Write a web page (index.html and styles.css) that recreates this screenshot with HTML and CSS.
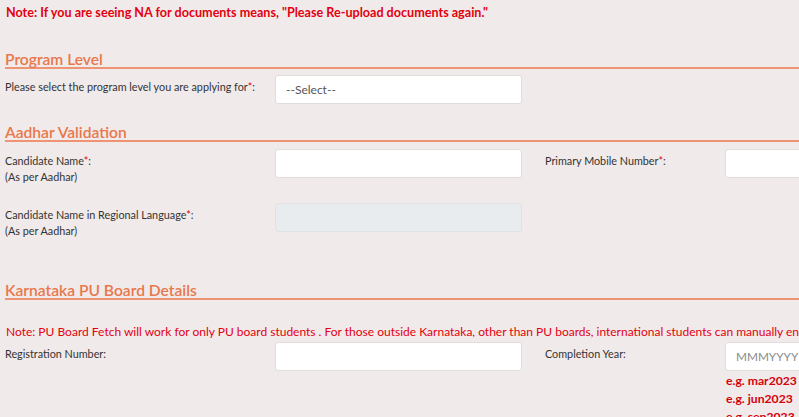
FILE: index.html
```html
<!DOCTYPE html>
<html>
<head>
<meta charset="utf-8">
<link rel="stylesheet" href="styles.css">
</head>
<body>
<div class="page">
  <p class="top-note">Note: If you are seeing NA for documents means, "Please Re-upload documents again."</p>

  <section class="section s-program">
    <h2 class="section-title">Program Level</h2>
    <div class="row r-program">
      <label class="label">Please select the program level you are applying for<span class="req">*</span>:</label>
      <div class="field"><div class="control select">--Select--</div></div>
    </div>
  </section>

  <section class="section s-aadhar">
    <h2 class="section-title">Aadhar Validation</h2>
    <div class="row r-name">
      <label class="label">Candidate Name<span class="req">*</span>:<br>(As per Aadhar)</label>
      <div class="field"><div class="control"></div></div>
      <label class="label label2">Primary Mobile Number<span class="req">*</span>:</label>
      <div class="field"><div class="control"></div></div>
    </div>
    <div class="row r-regional">
      <label class="label">Candidate Name in Regional Language<span class="req">*</span>:<br>(As per Aadhar)</label>
      <div class="field"><div class="control disabled"></div></div>
    </div>
  </section>

  <section class="section s-pu">
    <h2 class="section-title">Karnataka PU Board Details</h2>
    <p class="pu-note">Note: PU Board Fetch will work for only PU board students . For those outside Karnataka, other than PU boards, international students can manually enter their details.</p>
    <div class="row r-reg">
      <label class="label">Registration Number:</label>
      <div class="field"><div class="control"></div></div>
      <label class="label label2">Completion Year:</label>
      <div class="field">
        <div class="control placeholder">MMMYYYY</div>
        <ul class="examples">
          <li>e.g. mar2023</li>
          <li>e.g. jun2023</li>
          <li>e.g. sep2023</li>
        </ul>
      </div>
    </div>
  </section>
</div>
</body>
</html>
```
FILE: styles.css
```css
html, body {
  margin: 0;
  padding: 0;
  overflow: hidden;
  background: #f1eaea;
}
body {
  font-family: "Lato", "Liberation Sans", sans-serif;
  color: #333;
  width: 799px;
  height: 417px;
}
.page {
  width: 1100px;
  padding: 5px 0 0 5px;
  box-sizing: border-box;
}
.top-note {
  margin: 0 0 0 1px;
  color: #e3000f;
  font-weight: 700;
  font-size: 12.6px;
  line-height: 16px;
}
.section-title {
  margin: 0;
  font-weight: 600;
  font-size: 15.6px;
  line-height: 16px;
  color: #e8784b;
  border-bottom: 2px solid #ee9373;
  padding-bottom: 0;
}
.s-program { margin-top: 30px; }
.s-aadhar { margin-top: 20px; }
.s-pu { margin-top: 43px; }
.row {
  display: grid;
  grid-template-columns: 270px 247px 203px 247px;
  column-gap: 0;
  align-items: start;
}
.label2 { padding-left: 23px; }
.r-program { margin-top: 6px; }
.r-name { margin-top: 7px; }
.r-regional { margin-top: 18px; }
.label {
  font-size: 10.8px;
  line-height: 16px;
  color: #333;
  padding-top: 4px;
}
.req { color: #e3000f; }
.control {
  box-sizing: border-box;
  height: 29px;
  background: #fff;
  border: 1px solid #e0dcdc;
  border-radius: 3px;
  font-size: 12px;
  line-height: 27px;
  padding: 0 10px;
  color: #555;
}
.disabled { background: #e9ecef; border-color: #dfe1e4; }
.placeholder { color: #8a8a8a; font-size: 11.8px; }
.pu-note {
  margin: 24px 0 0 1px;
  color: #e3000f;
  font-size: 12px;
  line-height: 16px;
  white-space: nowrap;
}
.r-reg { margin-top: 2px; }
.examples {
  list-style: none;
  margin: 1px 0 0 1px;
  padding: 0;
  color: #d6000c;
  font-weight: 700;
  font-size: 12.2px;
  line-height: 18px;
}
```
